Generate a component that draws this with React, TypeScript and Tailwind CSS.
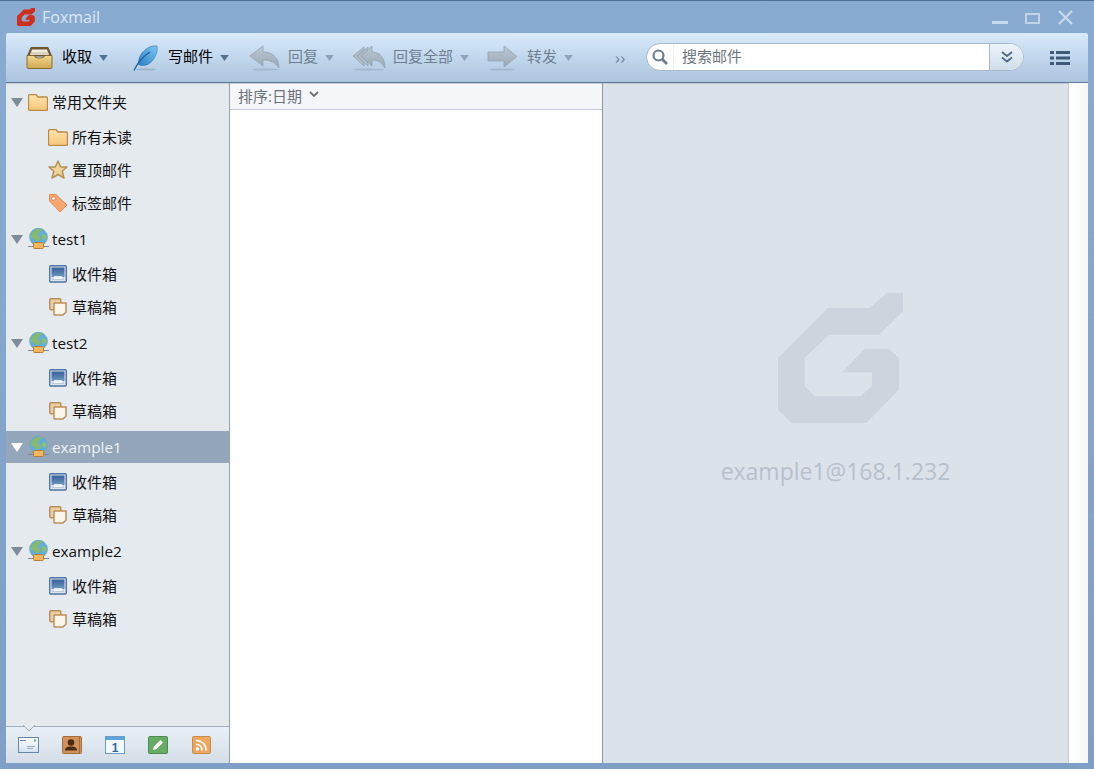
import React from "react";

const FONT = { fontFamily: '"Open Sans","Noto Sans CJK SC",sans-serif' };

const Caret = ({ dim }: { dim?: boolean }) => (
  <svg width="9" height="6" viewBox="0 0 10 7" className="shrink-0">
    <path d="M0 0H10L5 7Z" fill={dim ? "#8fa4ba" : "#54708f"} />
  </svg>
);

const LogoG = ({ w, h, fill, thick }: { w: number; h: number; fill: string; thick?: boolean }) => (
  <svg width={w} height={h} viewBox="55 40 375 390" className="shrink-0">
    <path
      d="M205 85H330L380 40H430V95L358 165H208L135 235V320L165 350H303L337 318V278H247L315 208H388L418 235V330L320 430H95L55 390V235Z"
      fill={fill}
      stroke={thick ? fill : "none"}
      strokeWidth={thick ? 30 : 0}
      strokeLinejoin="round"
    />
  </svg>
);

const InboxIcon = () => (
  <svg width="27" height="23" viewBox="0 0 27 23" className="shrink-0">
    <defs>
      <linearGradient id="ib" x1="0" y1="0" x2="0" y2="1">
        <stop offset="0" stopColor="#f0d98f" />
        <stop offset="1" stopColor="#cfa750" />
      </linearGradient>
    </defs>
    <path d="M5 1.500H22L25.500 10H1.500Z" fill="#6d5a35" stroke="#70552a" />
    <path d="M6 3.500H21L22.500 8H4.500Z" fill="#f4eee0" />
    <path d="M5 6H22L23 9H4Z" fill="#d9d2c0" />
    <path d="M1 9.500H8C9 13 18 13 19 9.500H26V21.500C26 22 25.500 22.500 25 22.500H2C1.500 22.500 1 22 1 21.500Z" fill="url(#ib)" stroke="#8a6a2e" strokeWidth="1" />
  </svg>
);

const FeatherIcon = () => (
  <svg width="26" height="26" viewBox="0 0 26 26" className="shrink-0">
    <defs>
      <linearGradient id="fe" x1="1" y1="0" x2="0" y2="1">
        <stop offset="0" stopColor="#7cc6f2" />
        <stop offset="1" stopColor="#2b7fc6" />
      </linearGradient>
    </defs>
    <ellipse cx="13" cy="24.500" rx="10" ry="1" fill="#9db4cc" />
    <path d="M24 1C25 7 22 14 17 18C13 21 8 21 5.500 19.500C5 12 9 7 14 3.500C17 1.500 21 .5 24 1Z" fill="url(#fe)" stroke="#2b74b3" strokeWidth=".6" />
    <path d="M1 25.500C4 19 9 12 17 7" fill="none" stroke="#1d5d96" strokeWidth="1.200" />
  </svg>
);

const ReplyIcon = () => (
  <svg width="32" height="26" viewBox="0 0 32 26" className="shrink-0">
    <defs>
      <linearGradient id="gr" x1="0" y1="0" x2="0" y2="1">
        <stop offset="0" stopColor="#bdc8d3" />
        <stop offset="1" stopColor="#98a7b6" />
      </linearGradient>
    </defs>
    <ellipse cx="16" cy="24.500" rx="13" ry="1" fill="#a4b8cd" />
    <path d="M1 11L14 1V7C24 7 30 13 30 23C26 17 21 15 14 15V21Z" fill="url(#gr)" stroke="#96a4b3" strokeWidth=".8" />
  </svg>
);

const ReplyAllIcon = () => (
  <svg width="34" height="26" viewBox="0 0 34 26" className="shrink-0">
    <defs>
      <linearGradient id="gra" x1="0" y1="0" x2="0" y2="1">
        <stop offset="0" stopColor="#bdc8d3" />
        <stop offset="1" stopColor="#98a7b6" />
      </linearGradient>
    </defs>
    <ellipse cx="17" cy="24.500" rx="15" ry="1" fill="#a4b8cd" />
    <path d="M1 11L12 2V5L5 11L12 18V21Z" fill="#b0bcc9" stroke="#96a4b3" strokeWidth=".8" />
    <path d="M5 11L16 2V5L9 11L16 18V21Z" fill="#b0bcc9" stroke="#96a4b3" strokeWidth=".8" />
    <path d="M9 11L20 1V7C28 7 33 13 33 23C29 17 26 15 20 15V21Z" fill="url(#gra)" stroke="#96a4b3" strokeWidth=".8" />
  </svg>
);

const ForwardIcon = () => (
  <svg width="31" height="26" viewBox="0 0 31 26" className="shrink-0">
    <defs>
      <linearGradient id="grf" x1="0" y1="0" x2="0" y2="1">
        <stop offset="0" stopColor="#bdc8d3" />
        <stop offset="1" stopColor="#98a7b6" />
      </linearGradient>
    </defs>
    <ellipse cx="15" cy="24.500" rx="13" ry="1" fill="#a4b8cd" />
    <path d="M1 7H17V1L30 11.500L17 22V16H1Z" fill="url(#grf)" stroke="#96a4b3" strokeWidth=".8" />
  </svg>
);

const FolderIcon = () => (
  <svg width="20" height="17" viewBox="0 0 20 17" className="shrink-0">
    <defs>
      <linearGradient id="fo" x1="0" y1="0" x2="0" y2="1">
        <stop offset="0" stopColor="#fde3ae" />
        <stop offset="1" stopColor="#f7c67a" />
      </linearGradient>
    </defs>
    <path d="M.5 2C.5 1 1 .5 2 .5H8L10 3H18C19 3 19.500 3.500 19.500 4.500V15C19.500 16 19 16.500 18 16.500H2C1 16.500 .5 16 .5 15Z" fill="url(#fo)" stroke="#b98a45" strokeWidth="1.300" />
  </svg>
);

const StarIcon = () => (
  <svg width="20" height="20" viewBox="0 0 20 20" className="shrink-0">
    <path d="M10 1L12.700 7H19L14.200 11.200L16 18L10 14.500L4 18L5.800 11.200L1 7H7.300Z" fill="#f0d39a" stroke="#b39257" strokeWidth="1.500" strokeLinejoin="round" />
  </svg>
);

const TagIcon = () => (
  <svg width="20" height="20" viewBox="0 0 20 20" className="shrink-0">
    <path d="M1.500 1.500H8L19 12L12 19L1.500 8Z" fill="#f6a66e" stroke="#e48c52" strokeLinejoin="round" />
    <circle cx="5.500" cy="5.500" r="1.800" fill="#fff" stroke="#c9743c" strokeWidth=".7" />
  </svg>
);

const GlobeIcon = () => (
  <svg width="21" height="22" viewBox="0 0 21 22" className="shrink-0">
    <circle cx="10.500" cy="9" r="9" fill="#62aedb" stroke="#7ba7ad" strokeWidth=".6" />
    <path d="M3 7C5 2 10 0 14 1.500C13 4 10 4 10 6C10 8 14 8 13 11C12 13 8 14 7 12C6 10 2 10 3 7Z" fill="#86b96f" />
    <path d="M15 6C17 6 19 8 18.500 10C17 12 15 12 14.500 10C14.200 8 14 7 15 6Z" fill="#8dbf76" />
    <rect x="0" y="18" width="21" height="1" fill="#7d8894" />
    <rect x="5.500" y="14.500" width="10" height="6" rx="1" fill="#f3b65c" stroke="#b5803b" />
  </svg>
);

const MonitorIcon = () => (
  <svg width="18" height="18" viewBox="0 0 18 18" className="shrink-0">
    <defs>
      <linearGradient id="mo" x1="0" y1="0" x2="0" y2="1">
        <stop offset="0" stopColor="#36629c" />
        <stop offset="1" stopColor="#6f95c0" />
      </linearGradient>
    </defs>
    <rect x=".7" y=".7" width="16.600" height="16.300" rx="1" fill="#dde5ee" stroke="#4f75a4" strokeWidth="1.400" />
    <rect x="2.500" y="2.500" width="13" height="9.500" fill="url(#mo)" />
    <path d="M5 11H13L14.500 14.500H3.500Z" fill="#f4f6f9" stroke="#8ea6c2" strokeWidth=".5" />
  </svg>
);

const DraftIcon = () => (
  <svg width="18" height="18" viewBox="0 0 18 18" className="shrink-0">
    <rect x=".8" y=".8" width="11" height="11" rx="1" fill="#eccfa6" stroke="#bb9058" strokeWidth="1.500" />
    <path d="M5 5H17V14L14 17H5Z" fill="#fbf6ec" stroke="#bb9058" strokeWidth="1.500" strokeLinejoin="round" />
  </svg>
);

const MailTab = () => (
  <svg width="21" height="16" viewBox="0 0 21 16">
    <defs>
      <linearGradient id="mt" x1="0" y1="0" x2="0" y2="1">
        <stop offset="0" stopColor="#fff" />
        <stop offset="1" stopColor="#d3e0ee" />
      </linearGradient>
    </defs>
    <rect x=".5" y=".5" width="20" height="15" fill="url(#mt)" stroke="#6a84a3" />
    <rect x="2" y="3" width="6" height="1" fill="#6b88a8" />
    <rect x="16" y="2.500" width="2" height="2" fill="#55b07a" />
    <rect x="9" y="9" width="8" height="1" fill="#9bb0c6" />
    <rect x="9" y="11" width="6" height="1" fill="#9bb0c6" />
  </svg>
);
const ContactTab = () => (
  <svg width="20" height="18" viewBox="0 0 20 18">
    <rect x=".5" y=".5" width="19" height="17" rx="1" fill="#d1915a" stroke="#a56d3c" />
    <circle cx="9" cy="6.500" r="3.300" fill="#4a2c16" />
    <path d="M3 14.500C3 11 6 10.500 9 10.500C12 10.500 15 11 15 14.500Z" fill="#4a2c16" />
    <rect x="17" y="1" width="1" height="16" fill="#a56d3c" />
  </svg>
);
const CalTab = () => (
  <svg width="20" height="18" viewBox="0 0 20 18">
    <rect x=".5" y=".5" width="19" height="17" fill="#f3f8fc" stroke="#6b9bc6" />
    <rect x="1" y="1" width="18" height="3" fill="#5ea3e0" />
    <text x="10" y="15.500" fontSize="12" fontWeight="700" textAnchor="middle" fill="#2f6b94" fontFamily="Liberation Sans">1</text>
  </svg>
);
const NoteTab = () => (
  <svg width="20" height="18" viewBox="0 0 20 18">
    <rect x=".5" y=".5" width="19" height="17" rx="1" fill="#66ab66" stroke="#4d8d4f" />
    <path d="M5 14L6 10.500L12.500 4L15 6.500L8.500 13Z" fill="#fff" />
  </svg>
);
const RssTab = () => (
  <svg width="19" height="18" viewBox="0 0 19 18">
    <rect x=".5" y=".5" width="18" height="17" rx="1" fill="#eda65f" stroke="#c98a4a" />
    <circle cx="5.500" cy="13" r="1.700" fill="#fff" />
    <path d="M4 8.500A5.500 5.500 0 0 1 10 14.500" fill="none" stroke="#fff" strokeWidth="1.700" />
    <path d="M4 4.500A9.500 9.500 0 0 1 14 14.500" fill="none" stroke="#fff" strokeWidth="1.700" />
  </svg>
);

const Label = ({ children, dim }: { children: React.ReactNode; dim?: boolean }) => (
  <span className={`block mb-[2px] text-[15px] leading-none whitespace-nowrap ${dim ? "text-[#6f7f90]" : "text-black"}`}>{children}</span>
);

const Header = ({ icon, label, active, cjk }: { icon: React.ReactNode; label: string; active?: boolean; cjk?: boolean }) => (
  <div className={`h-8 flex items-center ${active ? "bg-[#93a6ba]" : ""}`}>
    <svg width="12" height="9" viewBox="0 0 12 9" className="ml-[5px] shrink-0">
      <path d="M0 0H12L6 9Z" fill={active ? "#ffffff" : "#7f8c99"} />
    </svg>
    <span className="ml-[5px] w-[24px] flex justify-start">{icon}</span>
    <span className={`${cjk ? "text-[15px]" : "text-[15.300px]"} ${active ? "text-[#eef3f8]" : "text-[#111]"}`}>{label}</span>
  </div>
);

const Child = ({ icon, label }: { icon: React.ReactNode; label: string }) => (
  <div className="h-[33px] flex items-center pl-[42px] pb-[1px]">
    <span className="w-[20px] flex justify-center shrink-0">{icon}</span>
    <span className="ml-[4px] text-[15px] text-[#111]">{label}</span>
  </div>
);

const Account = ({ name, active }: { name: string; active?: boolean }) => (
  <div className="flex flex-col">
    <Header icon={<GlobeIcon />} label={name} active={active} />
    <div className="mt-[3px] flex flex-col">
      <Child icon={<MonitorIcon />} label="收件箱" />
      <Child icon={<DraftIcon />} label="草稿箱" />
    </div>
  </div>
);

export default function App() {
  return (
    <div
      style={FONT}
      className="w-[1094px] h-[769px] flex flex-col overflow-hidden bg-gradient-to-b from-[#8aabd1] to-[#7f9fc6] border-t border-[#4d6f94]"
    >
      {/* title bar */}
      <div className="h-[32px] shrink-0 flex items-center pl-[17px] pr-[21px]">
        <LogoG w={18} h={18} fill="#cf2f1c" thick />
        <span className="ml-[7px] text-[16px] text-[#dce8f4]">Foxmail</span>
        <div className="ml-auto flex items-center">
          <div className="w-[16px] h-[3px] mt-[10px] bg-[#c7d8ea]" />
          <div className="ml-[17px] w-[15px] h-[11px] border-2 border-[#c0d3e7] mt-[3px]" />
          <svg width="15" height="15" viewBox="0 0 15 15" className="ml-[18px]">
            <path d="M1 1L14 14M14 1L1 14" stroke="#c7d8ea" strokeWidth="2.200" />
          </svg>
        </div>
      </div>

      {/* toolbar */}
      <div className="mx-[6px] h-[50px] shrink-0 rounded-t-[2px] flex items-center pl-[20px] bg-gradient-to-b from-[#d8eafb] to-[#abc4de] border-b border-[#5d7a98]">
        <InboxIcon />
        <span className="ml-[9px]"><Label>收取</Label></span>
        <span className="ml-[7px]"><Caret /></span>
        <span className="ml-[25px]"><FeatherIcon /></span>
        <span className="ml-[9px]"><Label>写邮件</Label></span>
        <span className="ml-[7px]"><Caret /></span>
        <span className="ml-[20px]"><ReplyIcon /></span>
        <span className="ml-[7px]"><Label dim>回复</Label></span>
        <span className="ml-[7px]"><Caret dim /></span>
        <span className="ml-[18px]"><ForwardOrAll /></span>
        <span className="ml-[7px]"><Label dim>回复全部</Label></span>
        <span className="ml-[7px]"><Caret dim /></span>
        <span className="ml-[18px]"><ForwardIcon /></span>
        <span className="ml-[9px]"><Label dim>转发</Label></span>
        <span className="ml-[7px]"><Caret dim /></span>
        <span className="ml-[42px] text-[17px] leading-none text-[#7389a3] w-[31px]">››</span>
        <div className="w-[378px] h-[28px] flex rounded-full border border-[#a9b8c8] bg-white overflow-hidden mb-[1px]">
          <div className="w-[27px] flex items-center justify-center border-r border-[#eef1f4]">
            <svg width="18" height="18" viewBox="0 0 18 18">
              <circle cx="7.500" cy="7.500" r="5" fill="none" stroke="#6c7d8e" strokeWidth="2.200" />
              <path d="M11 11L16 16" stroke="#6c7d8e" strokeWidth="2.800" />
            </svg>
          </div>
          <span className="ml-[8px] text-[15px] leading-[25px] text-[#6d7680] flex-1">搜索邮件</span>
          <div className="w-[34px] bg-gradient-to-b from-[#edf3f9] to-[#cfdeec] border-l border-[#a9b8c8] flex items-center justify-center">
            <svg width="12" height="12" viewBox="0 0 12 12">
              <path d="M1 1L6 5L11 1M1 6.500L6 10.500L11 6.500" fill="none" stroke="#516a84" strokeWidth="1.800" />
            </svg>
          </div>
        </div>
        <svg width="20" height="16" viewBox="0 0 20 16" className="ml-[26px]">
          <g fill="#3f5a77">
            <rect x="0" y="1" width="4" height="3" />
            <rect x="6" y="1" width="14" height="3" />
            <rect x="0" y="6.500" width="4" height="3" />
            <rect x="6" y="6.500" width="14" height="3" />
            <rect x="0" y="12" width="4" height="3" />
            <rect x="6" y="12" width="14" height="3" />
          </g>
        </svg>
      </div>

      {/* body */}
      <div className="mx-[6px] h-[680px] shrink-0 flex">
        {/* sidebar */}
        <div className="w-[224px] shrink-0 flex flex-col bg-[#e5eaef] border-r border-[#98a3ae]">
          <div className="flex-1 flex flex-col gap-[3px] pt-[3px] shadow-[inset_0_1px_0_#c9ced4]">
            <div className="flex flex-col">
              <Header icon={<FolderIcon />} label="常用文件夹" cjk />
              <div className="mt-[3px] flex flex-col">
                <Child icon={<FolderIcon />} label="所有未读" />
                <Child icon={<StarIcon />} label="置顶邮件" />
                <Child icon={<TagIcon />} label="标签邮件" />
              </div>
            </div>
            <Account name="test1" />
            <Account name="test2" />
            <Account name="example1" active />
            <Account name="example2" />
          </div>
          {/* bottom tabs */}
          <div className="relative h-[37px] shrink-0 border-t border-[#a3afbb] bg-gradient-to-b from-[#e8f0f7] to-[#d5dee7] flex items-center pl-[12px] pb-[1px]">
            <div className="absolute left-[17px] -top-[2px] w-[12px] h-[6px]">
              <svg width="12" height="7" viewBox="0 0 12 7">
                <path d="M0 0L6 6L12 0" fill="#e5eaf0" stroke="#a3afbb" />
              </svg>
            </div>
            <span className="w-[21px] flex justify-center"><MailTab /></span>
            <span className="ml-[22px] w-[21px] flex justify-center"><ContactTab /></span>
            <span className="ml-[23px] w-[20px] flex justify-center"><CalTab /></span>
            <span className="ml-[23px] w-[20px] flex justify-center"><NoteTab /></span>
            <span className="ml-[23px] w-[20px] flex justify-center"><RssTab /></span>
          </div>
        </div>

        {/* list */}
        <div className="w-[373px] shrink-0 bg-white border-r border-[#8f979f] flex flex-col">
          <div className="h-[27px] shrink-0 bg-[#f4f6f9] border-b border-[#c4cad1] shadow-[inset_0_1px_0_#c9ced4] flex items-center pl-[8px]">
            <span className="text-[15px] text-[#6b7178]">排序:日期</span>
            <svg width="10" height="7" viewBox="0 0 10 7" className="ml-[7px] mb-[3px]">
              <path d="M1 1L5 5L9 1" fill="none" stroke="#6b7178" strokeWidth="1.800" />
            </svg>
          </div>
        </div>

        {/* preview */}
        <div className="w-[465px] shrink-0 bg-[#dbe2ea] flex flex-col items-center pt-[210px] shadow-[inset_0_1px_0_#c3c9d0]">
          <span className="ml-[10px]"><LogoG w={125} h={130} fill="#cdd4de" /></span>
          <span className="mt-[32px] text-[23px] leading-[32px] text-[#b7c1ce]">example1@168.1.232</span>
        </div>

        {/* right strip */}
        <div className="flex-1 bg-gradient-to-r from-white to-[#f6f7f7] border-l border-[#c8cccf]" />
      </div>
    </div>
  );
}

function ForwardOrAll() {
  return <ReplyAllIcon />;
}
